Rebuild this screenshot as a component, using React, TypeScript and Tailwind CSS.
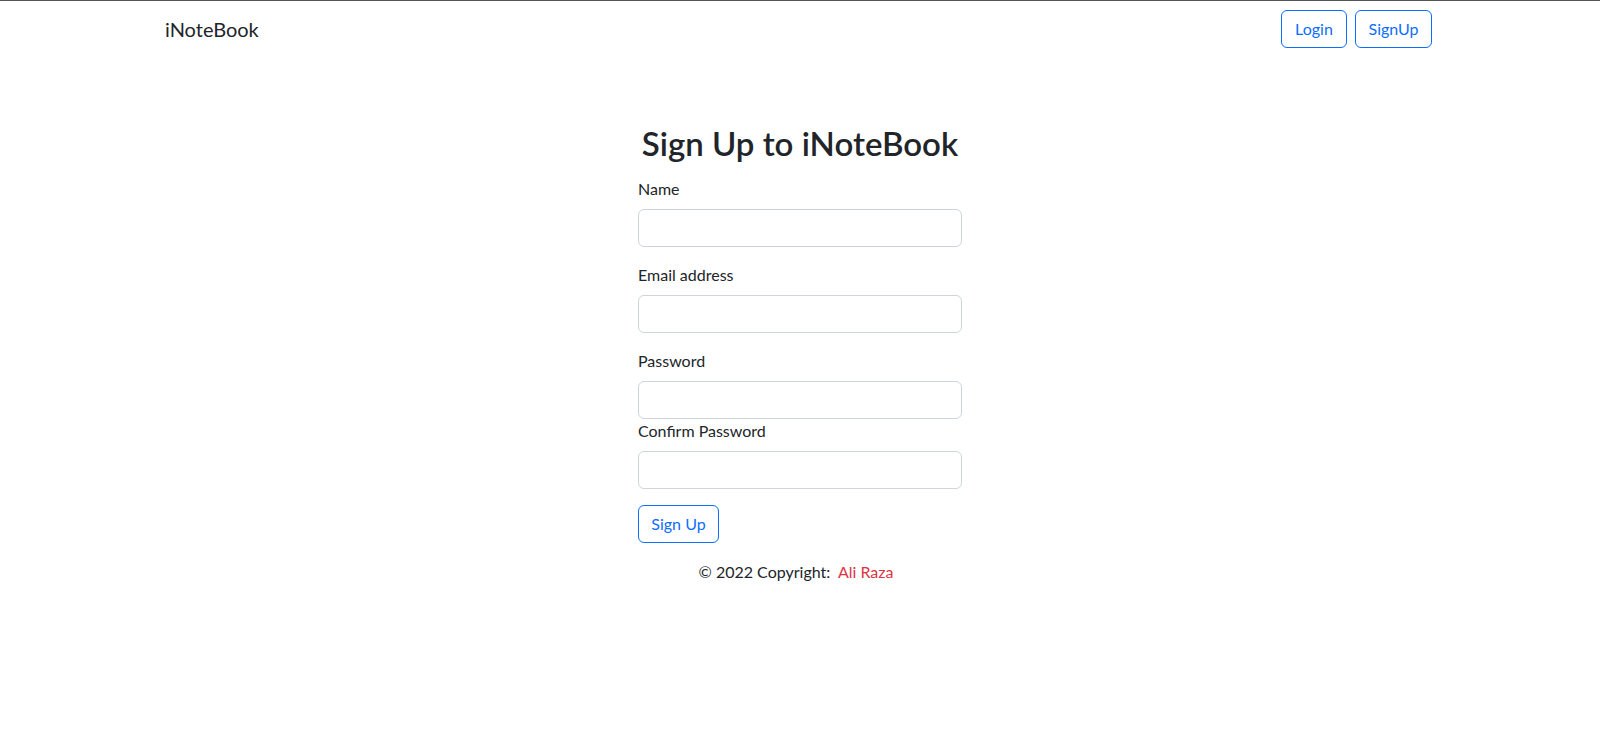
import React from 'react'

const fields = [
  { id: 'name', label: 'Name', type: 'text', gap: true },
  { id: 'email', label: 'Email address', type: 'email', gap: true },
  { id: 'password', label: 'Password', type: 'password', gap: false },
  { id: 'cpassword', label: 'Confirm Password', type: 'password', gap: true },
]

export default function App() {
  return (
    <div className="min-h-[750px] bg-white text-[#212529] border-t border-[#555] font-['Segoe_UI','Lato','Liberation_Sans',sans-serif]">
      <nav className="h-[56px]">
        <div className="mx-auto w-[1272px] flex items-center justify-between pt-[9px]">
          <a className="text-[20px] leading-[30px] text-[#212529] pl-[1px]">iNoteBook</a>
          <div className="flex gap-2 pr-[4px]">
            <button className="h-[38px] w-[66px] text-center text-[16px] text-[#0d6efd] border border-[#0d6efd] rounded-[6px] bg-white">
              Login
            </button>
            <button className="h-[38px] w-[77px] text-center text-[16px] text-[#0d6efd] border border-[#0d6efd] rounded-[6px] bg-white">
              SignUp
            </button>
          </div>
        </div>
      </nav>

      <main className="flex flex-col items-center pt-[67px]">
        <h2 className="text-[33px] leading-[38px] font-semibold text-[#212529] mb-[15px]">Sign Up to iNoteBook</h2>
        <form className="w-[324px]">
          {fields.map((f) => (
            <div key={f.id} className={f.gap ? 'mb-4' : ''}>
              <label htmlFor={f.id} className="block text-[16px] leading-6 mb-2">
                {f.label}
              </label>
              <input
                id={f.id}
                type={f.type}
                className="block w-full h-[38px] px-3 border border-[#ced4da] rounded-[6px] outline-none"
              />
            </div>
          ))}
          <button
            type="button"
            className="h-[38px] w-[81px] text-center text-[16px] text-[#0d6efd] border border-[#0d6efd] rounded-[6px] bg-white"
          >
            Sign Up
          </button>
        </form>
        <footer className="mt-[17px] text-[16px] leading-6 pr-[8px]">
          © 2022 Copyright:&nbsp; <span className="text-[#dc3545]">Ali Raza</span>
        </footer>
      </main>
    </div>
  )
}
